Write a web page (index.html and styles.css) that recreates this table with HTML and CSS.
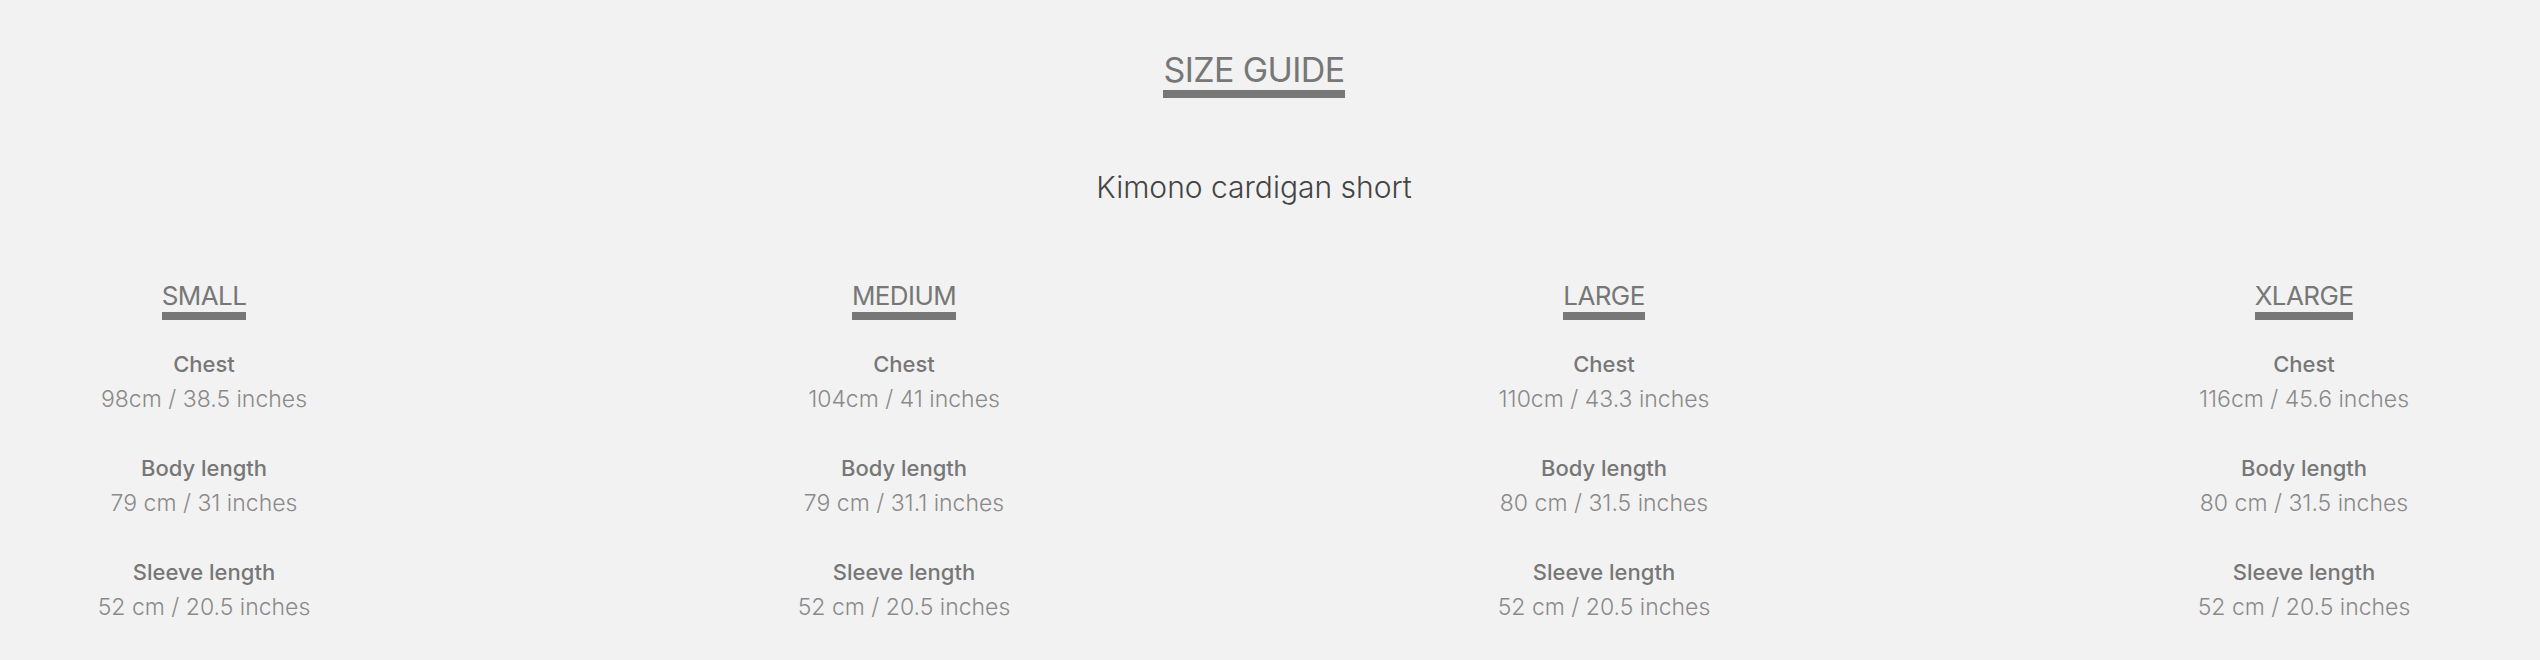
FILE: index.html
```html
<!DOCTYPE html>
<html lang="en">
<head>
  <meta charset="UTF-8" />
  <title>Size Guide</title>
  <link rel="stylesheet" href="styles.css">
</head>
<body>

<div class="guide">
  <h1 class="guide-title"><span>SIZE GUIDE</span></h1>
  <p class="product-name">Kimono cardigan short</p>

  <div class="size-grid">
    <div class="size-col">
      <h2 class="size-name"><span>SMALL</span></h2>
      <div class="measure">
        <div class="measure-label">Chest</div>
        <div class="measure-value">98cm / 38.5 inches</div>
      </div>
      <div class="measure">
        <div class="measure-label">Body length</div>
        <div class="measure-value">79 cm / 31 inches</div>
      </div>
      <div class="measure">
        <div class="measure-label">Sleeve length</div>
        <div class="measure-value">52 cm / 20.5 inches</div>
      </div>
    </div>

    <div class="size-col">
      <h2 class="size-name"><span>MEDIUM</span></h2>
      <div class="measure">
        <div class="measure-label">Chest</div>
        <div class="measure-value">104cm / 41 inches</div>
      </div>
      <div class="measure">
        <div class="measure-label">Body length</div>
        <div class="measure-value">79 cm / 31.1 inches</div>
      </div>
      <div class="measure">
        <div class="measure-label">Sleeve length</div>
        <div class="measure-value">52 cm / 20.5 inches</div>
      </div>
    </div>

    <div class="size-col">
      <h2 class="size-name"><span>LARGE</span></h2>
      <div class="measure">
        <div class="measure-label">Chest</div>
        <div class="measure-value">110cm / 43.3 inches</div>
      </div>
      <div class="measure">
        <div class="measure-label">Body length</div>
        <div class="measure-value">80 cm / 31.5 inches</div>
      </div>
      <div class="measure">
        <div class="measure-label">Sleeve length</div>
        <div class="measure-value">52 cm / 20.5 inches</div>
      </div>
    </div>

    <div class="size-col">
      <h2 class="size-name"><span>XLARGE</span></h2>
      <div class="measure">
        <div class="measure-label">Chest</div>
        <div class="measure-value">116cm / 45.6 inches</div>
      </div>
      <div class="measure">
        <div class="measure-label">Body length</div>
        <div class="measure-value">80 cm / 31.5 inches</div>
      </div>
      <div class="measure">
        <div class="measure-label">Sleeve length</div>
        <div class="measure-value">52 cm / 20.5 inches</div>
      </div>
    </div>
  </div>
</div>

</body>
</html>
```

FILE: styles.css
```css
:root {
  --bg: #f2f2f2;
  --grey: #777;
  --grey-light: #8a8a8a;
  --dark: #444;
}

body {
  margin: 0;
  background: var(--bg);
  font-family: Inter, 'Noto Sans', sans-serif;
  color: var(--grey);
}

.guide {
  width: 2508px;
  text-align: center;
  padding-top: 53px;
}

.guide-title {
  margin: 0;
  font-size: 34px;
  font-weight: 400;
  line-height: 34px;
  letter-spacing: -0.6px;
}

.guide-title span {
  display: inline-block;
  padding-bottom: 3px;
  border-bottom: 8px solid var(--grey);
}

.product-name {
  margin: 69px 0 0;
  font-size: 30px;
  font-weight: 300;
  line-height: 40px;
  color: var(--dark);
}

.size-grid {
  display: grid;
  grid-template-columns: repeat(4, 408px);
  justify-content: space-between;
  margin-top: 76px;
}

.size-name {
  margin: 0 0 27px;
  font-size: 26px;
  font-weight: 400;
  line-height: 26px;
  letter-spacing: -0.6px;
}

.size-name span {
  display: inline-block;
  padding-bottom: 3px;
  border-bottom: 8px solid var(--grey);
}

.measure {
  margin-bottom: 34px;
}

.measure-label {
  font-size: 22px;
  font-weight: 500;
  line-height: 35px;
}

.measure-value {
  font-size: 23px;
  font-weight: 300;
  line-height: 35px;
  color: var(--grey-light);
}
```
